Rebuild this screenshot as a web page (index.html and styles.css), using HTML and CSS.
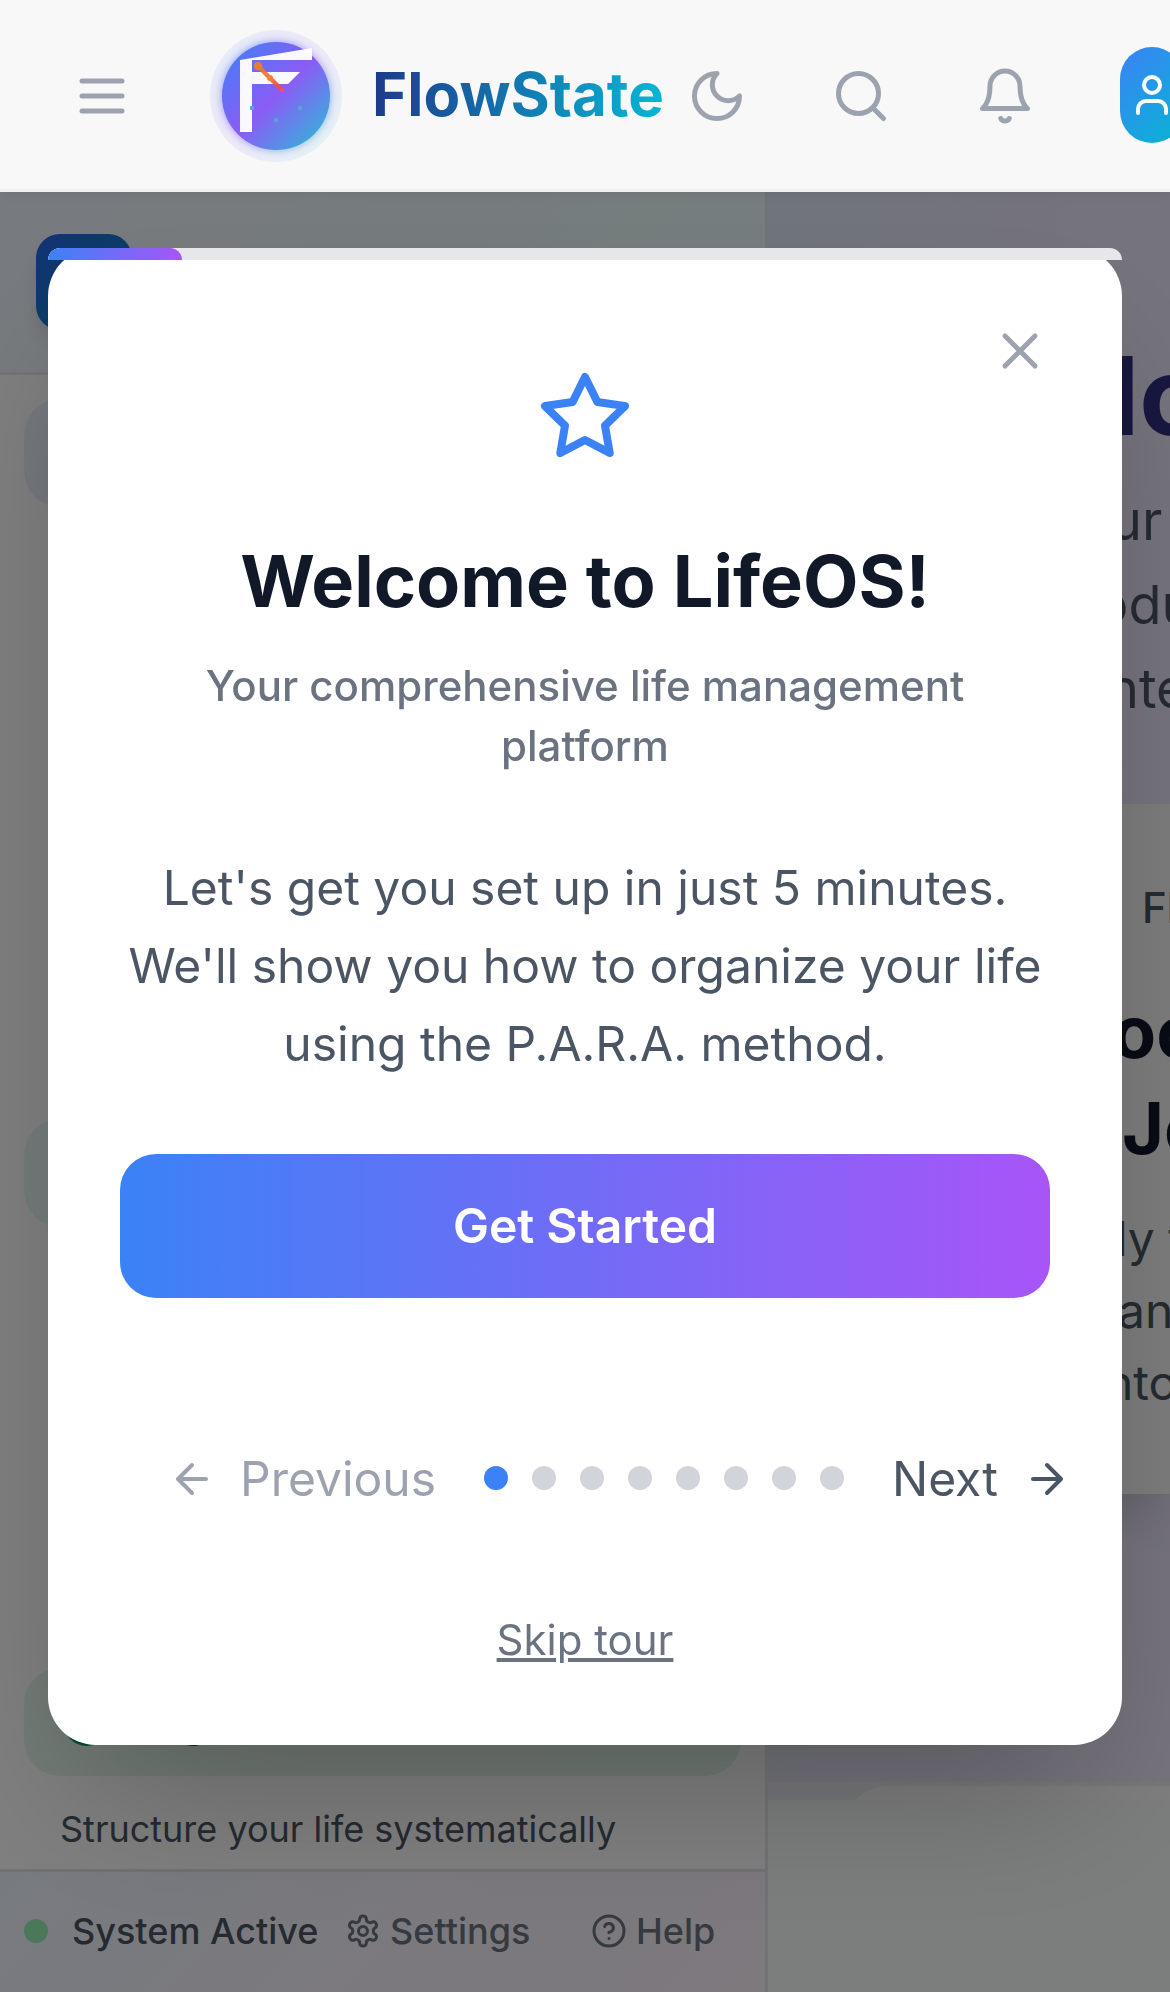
FILE: index.html
```html
<!DOCTYPE html>
<html lang="en">
<head>
<meta charset="utf-8">
<title>FlowState</title>
<link rel="stylesheet" href="styles.css">
</head>
<body>
<div class="app">
  <header class="topbar">
    <svg class="icon menu" viewBox="0 0 24 24"><path d="M4 6h16M4 12h16M4 18h16"/></svg>
    <svg class="logo" viewBox="0 0 144 144">
      <defs>
        <linearGradient id="disc" x1="0" y1="0" x2="1" y2="1"><stop offset="0" stop-color="#3b82f6"/><stop offset=".5" stop-color="#8b5cf6"/><stop offset="1" stop-color="#22c3d4"/></linearGradient>
        <linearGradient id="spark" gradientUnits="userSpaceOnUse" x1="50" y1="38" x2="80" y2="68"><stop offset="0" stop-color="#f59e0b"/><stop offset="0.15" stop-color="#f08028"/><stop offset="1" stop-color="#ef4444"/></linearGradient>
        <filter id="glow" x="-20%" y="-20%" width="140%" height="140%"><feGaussianBlur stdDeviation="4"/></filter>
      </defs>
      <circle cx="72" cy="72" r="66" fill="url(#disc)" opacity=".1"/>
      <circle cx="72" cy="72" r="54" fill="url(#disc)" opacity=".7" filter="url(#glow)"/>
      <circle cx="72" cy="72" r="54" fill="url(#disc)"/>
      <path d="M36 36L108 24V36H48V48H96L84 60H48V108H36Z" fill="#fff" opacity=".96"/>
      <g opacity=".9"><path d="M54 42L78 66" stroke="url(#spark)" stroke-width="4.5"/>
      <circle cx="54" cy="42" r="4.3" fill="#f08024"/><circle cx="66" cy="54" r="3" fill="#f97316"/><circle cx="78" cy="66" r="2.3" fill="#ef5350"/></g>
      <g fill="#55a5d8"><rect x="46" y="82" width="4" height="4" rx="1"/><rect x="70" y="94" width="4" height="4" rx="1"/><rect x="94" y="82" width="4" height="4" rx="1"/></g>
    </svg>
    <span class="brand">FlowState</span>
    <nav class="tools">
      <svg class="icon" viewBox="0 0 24 24"><path d="M12 3a6 6 0 0 0 9 9 9 9 0 1 1-9-9Z"/></svg>
      <svg class="icon" viewBox="0 0 24 24"><circle cx="11" cy="11" r="8"/><path d="m21 21-4.3-4.3"/></svg>
      <svg class="icon" viewBox="0 0 24 24"><path d="M6 8a6 6 0 0 1 12 0c0 7 3 9 3 9H3s3-2 3-9"/><path d="M10.3 21a1.94 1.94 0 0 0 3.4 0"/></svg>
    </nav>
    <div class="user"><svg class="icon" viewBox="0 0 24 24"><path d="M19 21v-2a4 4 0 0 0-4-4H9a4 4 0 0 0-4 4v2"/><circle cx="12" cy="7" r="4"/></svg></div>
  </header>

  <div class="shell">
    <aside class="sidebar">
      <div class="side-head"><div class="side-logo"></div></div>
      <div class="side-body">
        <div class="item blue"></div>
        <div class="item teal"></div>
        <div class="item green"><span class="item-icon"></span><span>Organize</span></div>
        <p class="hint">Structure your life systematically</p>
      </div>
      <footer class="side-foot">
        <span class="status"></span><b>System Active</b>
        <svg class="icon" viewBox="0 0 24 24"><path d="M12.22 2h-.44a2 2 0 0 0-2 2v.18a2 2 0 0 1-1 1.73l-.43.25a2 2 0 0 1-2 0l-.15-.08a2 2 0 0 0-2.73.73l-.22.38a2 2 0 0 0 .73 2.73l.15.1a2 2 0 0 1 1 1.72v.51a2 2 0 0 1-1 1.74l-.15.09a2 2 0 0 0-.73 2.73l.22.38a2 2 0 0 0 2.73.73l.15-.08a2 2 0 0 1 2 0l.43.25a2 2 0 0 1 1 1.73V20a2 2 0 0 0 2 2h.44a2 2 0 0 0 2-2v-.18a2 2 0 0 1 1-1.73l.43-.25a2 2 0 0 1 2 0l.15.08a2 2 0 0 0 2.73-.73l.22-.39a2 2 0 0 0-.73-2.73l-.15-.08a2 2 0 0 1-1-1.74v-.5a2 2 0 0 1 1-1.74l.15-.09a2 2 0 0 0 .73-2.73l-.22-.38a2 2 0 0 0-2.73-.73l-.15.08a2 2 0 0 1-2 0l-.43-.25a2 2 0 0 1-1-1.73V4a2 2 0 0 0-2-2z"/><circle cx="12" cy="12" r="3"/></svg>
        <span class="settings">Settings</span>
        <svg class="icon" viewBox="0 0 24 24"><circle cx="12" cy="12" r="10"/><path d="M9.09 9a3 3 0 0 1 5.83 1c0 2-3 3-3 3M12 17h.01"/></svg>
        <span>Help</span>
      </footer>
    </aside>

    <main class="main">
      <section class="hero">
        <h1 class="hero-title">lo</h1>
        <div class="hero-text"><p class="t-ur">ur</p><p class="t-odu">odu</p><p class="t-nte">nte</p></div>
        <div class="card">
          <p class="label">Fl</p>
          <div class="card-title"><p class="t-oc">oc</p><p class="t-j">Jo</p></div>
          <div class="card-text"><p class="t-ly">ly t</p><p class="t-an">an</p><p class="t-nto">nto</p></div>
        </div>
      </section>
      <section class="next"><div class="panel"></div></section>
    </main>
  </div>
</div>

<div class="overlay">
  <div class="modal" role="dialog">
    <div class="progress"><div class="progress-fill"></div></div>
    <svg class="icon close" viewBox="0 0 24 24"><path d="M18 6 6 18M6 6l12 12"/></svg>
    <svg class="icon star" viewBox="0 0 24 24"><path d="M12 2l3.09 6.26L22 9.27l-5 4.87 1.18 6.88L12 17.77l-6.18 3.25L7 14.14 2 9.27l6.91-1.01z"/></svg>
    <h2>Welcome to LifeOS!</h2>
    <p class="subtitle">Your comprehensive life management platform</p>
    <p class="copy">Let's get you set up in just 5 minutes. We'll show you how to organize your life using the P.A.R.A. method.</p>
    <button class="cta">Get Started</button>
    <div class="pager">
      <span class="prev"><svg class="icon" viewBox="0 0 24 24"><path d="m12 19-7-7 7-7M19 12H5"/></svg>Previous</span>
      <span class="dots"><i class="on"></i><i></i><i></i><i></i><i></i><i></i><i></i><i></i></span>
      <span class="nxt">Next<svg class="icon" viewBox="0 0 24 24"><path d="M5 12h14M12 5l7 7-7 7"/></svg></span>
    </div>
    <a class="skip">Skip tour</a>
  </div>
</div>
</body>
</html>
```
FILE: styles.css
```css
* { box-sizing: border-box; margin: 0; padding: 0; }
body { width: 1170px; height: 1992px; overflow: hidden; font-family: Inter, sans-serif; background: #fff; }
.icon { display: block; flex: none; width: 60px; height: 60px; fill: none; stroke: currentColor; stroke-width: 2; stroke-linecap: round; stroke-linejoin: round; }
.app { width: 1170px; height: 1992px; overflow: hidden; display: flex; flex-direction: column; }

/* Top bar sits above the dimming overlay */
.topbar { position: relative; z-index: 20; flex: none; height: 192px; padding: 3px 0 0 72px; display: flex; align-items: center; background: #f8f8f8; border-bottom: 3px solid #f0f0f0; color: #9ca3af; box-shadow: 0 3px 9px rgba(0,0,0,.05); }
.logo { flex: none; width: 144px; height: 144px; margin-left: 72px; }
.brand { flex: none; width: 290px; margin: -4px 0 0 24px; font-size: 60px; line-height: 84px; font-weight: 700; letter-spacing: 0; color: transparent; background: linear-gradient(90deg, #1e3a8a, #06b6d4); -webkit-background-clip: text; background-clip: text; }
.tools { display: flex; gap: 84px; margin-left: 25px; }
.user { flex: none; width: 64px; height: 96px; margin: -2px 0 0 85px; border-radius: 32px; display: flex; align-items: center; justify-content: center; color: #fff; background: linear-gradient(135deg, #3b82f6, #06b6d4); }
.user .icon { width: 48px; height: 48px; }

.shell { flex: 1; display: flex; min-height: 0; }
.sidebar { flex: none; width: 768px; display: flex; flex-direction: column; border-right: 3px solid #e5e7eb; background: #fff; }
.side-head { flex: none; height: 183px; padding: 42px 36px; border-bottom: 3px solid #e9e9ec; background: linear-gradient(135deg, #eff4ff, #edf8fa 40%, #ecfcfc); }
.side-logo { width: 96px; height: 96px; border-radius: 24px; background: linear-gradient(135deg, #2563eb, #0891b2); box-shadow: 0 12px 18px -3px rgba(0,0,0,.12); }
.side-body { flex: 1; padding: 24px 24px 0; display: flex; flex-direction: column; }
.item { flex: none; height: 108px; padding: 0 39px 1px; border-radius: 36px; display: flex; align-items: center; gap: 21px; font-size: 42px; font-weight: 600; color: #065f46; }
.blue { background: #eaf1fb; }
.teal { margin-top: 612px; background: #e8f6f7; }
.green { margin-top: 441px; background: linear-gradient(90deg, #e6f7ee, #e3f5e9); }
.item-icon { width: 48px; height: 48px; border-radius: 24px; background: #059669; }
.hint { margin: 29px 0 0 36px; font-size: 36px; line-height: 48px; font-weight: 400; color: #4b5563; white-space: nowrap; }
.side-foot { flex: none; height: 123px; padding: 0 0 2px 24px; display: flex; align-items: center; border-top: 3px solid #e2e3e8; background: linear-gradient(135deg, #eff6ff, #f8f3fc 60%, #faf2fb); font-size: 36px; font-weight: 500; color: #6b7280; }
.side-foot b { flex: none; width: 273px; padding-left: 24px; font-weight: 500; color: #4b5563; white-space: nowrap; }
.side-foot b + .icon { margin-left: 24px; }
.side-foot .icon { width: 36px; height: 36px; margin-right: 9px; }
.settings { width: 201px; }
.status { flex: none; width: 24px; height: 24px; border-radius: 50%; background: #96f0b6; }

.main { flex: 1; min-width: 0; overflow: hidden; display: flex; flex-direction: column; background: #f7fcf8; }
.main p, .main h1 { white-space: nowrap; }
.hero { flex: none; height: 1590px; padding-top: 138px; background: linear-gradient(98deg, #e0e9fb, #eae6f7 50%, #ece6f9); }
.hero-title { font-size: 108px; line-height: 132px; font-weight: 700; color: #312e81; margin-left: 342px; }
.hero-text { margin-top: 17px; font-size: 54px; line-height: 84px; color: #4b5563; }
.card { margin: 73px 0 0 240px; height: 690px; padding-top: 74px; background: #f8f8f8; box-shadow: 0 30px 45px -9px rgba(0,0,0,.15); color: #4b5563; }
.label { margin-left: 134px; font-size: 42px; line-height: 60px; font-weight: 500; }
.card-title { margin-top: 46px; font-size: 72px; line-height: 96px; font-weight: 700; color: #0f172a; }
.card-text { margin-top: 27px; font-size: 48px; line-height: 72px; }
.t-ur { margin-left: 342px; }
.t-odu { margin-left: 328px; }
.t-nte { margin-left: 339px; }
.t-oc { margin-left: 104px; }
.t-j { margin-left: 114px; }
.t-ly { margin-left: 108px; }
.t-an { margin-left: 110px; }
.t-nto { margin-left: 97px; }
.next { flex: none; height: 18px; padding-left: 72px; overflow: hidden; background: #eef0f5; border-top: 1px solid #efefef; }
.panel { height: 96px; border: 3px solid #efefef; border-right: 0; border-radius: 48px 0 0 0; background: #fdfdfd; }

.overlay { position: fixed; inset: 0; z-index: 10; display: flex; align-items: center; justify-content: center; padding-top: 1px; background: rgba(0,0,0,.5); }
.modal { position: relative; width: 1074px; height: 1497px; padding: 121px 72px 0; border-radius: 48px; background: #fff; box-shadow: 0 75px 150px -36px rgba(0,0,0,.25); display: flex; flex-direction: column; align-items: center; text-align: center; }
.progress { position: absolute; top: 0; left: 0; right: 0; height: 12px; border-radius: 12px 12px 0 0; overflow: hidden; background: #e5e7eb; }
.progress-fill { width: 12.5%; height: 12px; border-radius: 12px 12px 0 0; background: linear-gradient(90deg, #3b82f6, #a855f7); }
.close { position: absolute; top: 73px; right: 72px; color: #9ca3af; }
.star { width: 96px; height: 96px; color: #3b82f6; }
.modal h2 { margin-top: 68px; font-size: 72px; line-height: 96px; font-weight: 700; color: #111827; white-space: nowrap; }
.subtitle { width: 860px; margin-top: 27px; font-size: 42px; line-height: 60px; font-weight: 500; color: #6b7280; }
.copy { width: 930px; margin-top: 73px; font-size: 48px; line-height: 78px; color: #4b5563; }
.cta { flex: none; width: 930px; height: 144px; margin-top: 71px; border: 0; border-radius: 36px; font: 600 48px/72px Inter, sans-serif; color: #fff; background: linear-gradient(90deg, #3b82f6, #a855f7); }
.pager { align-self: stretch; flex: none; height: 72px; margin: 144px 0 0 48px; display: flex; align-items: center; font-size: 48px; color: #4b5563; }
.pager .icon { width: 48px; height: 48px; margin-top: 1px; }
.prev, .nxt { display: flex; align-items: center; gap: 24px; flex: none; }
.prev { color: #9ca3af; width: 316px; }
.nxt { gap: 25px; }
.dots { display: flex; gap: 24px; flex: none; width: 408px; }
.dots i { width: 24px; height: 24px; border-radius: 50%; background: #d1d5db; }
.dots .on { background: #3b82f6; }
.skip { margin-top: 96px; font-size: 42px; line-height: 60px; color: #6b7280; text-decoration: underline; }
```
